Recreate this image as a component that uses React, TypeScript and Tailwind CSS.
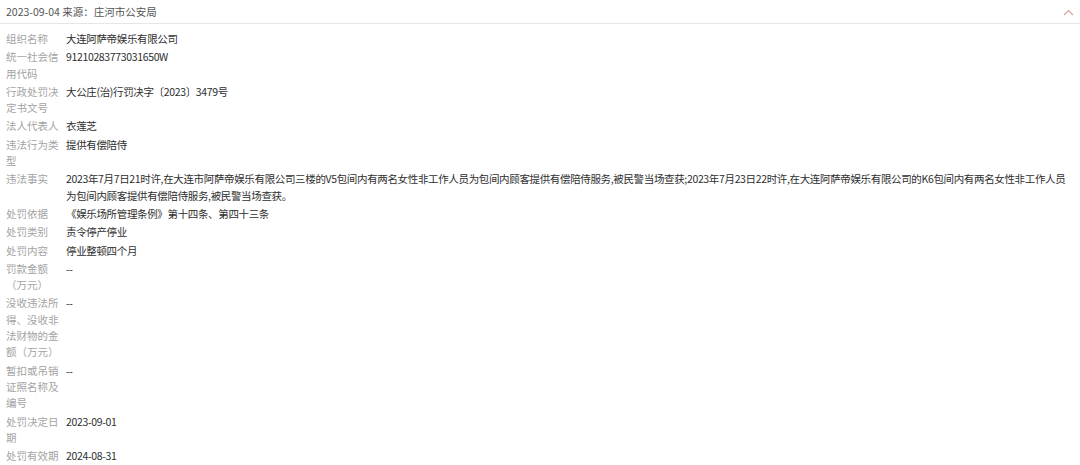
import React from 'react';

const rows: { label: string; value: React.ReactNode }[] = [
  { label: '组织名称', value: '大连阿萨帝娱乐有限公司' },
  { label: '统一社会信用代码', value: '91210283773031650W' },
  { label: '行政处罚决定书文号', value: '大公庄(治)行罚决字〔2023〕3479号' },
  { label: '法人代表人', value: '衣莲芝' },
  { label: '违法行为类型', value: '提供有偿陪侍' },
  {
    label: '违法事实',
    value: (
      <>
        2023年7月7日21时许,在大连市阿萨帝娱乐有限公司三楼的V5包间内有两名女性非工作人员为包间内顾客提供有偿陪侍服务,被民警当场查获;2023年7月23日22时许,在大连阿萨帝娱乐有限公司的K6包间内有两名女性非工作人员
        <br />
        为包间内顾客提供有偿陪侍服务,被民警当场查获。
      </>
    ),
  },
  { label: '处罚依据', value: '《娱乐场所管理条例》第十四条、第四十三条' },
  { label: '处罚类别', value: '责令停产停业' },
  { label: '处罚内容', value: '停业整顿四个月' },
  { label: '罚款金额（万元）', value: '--' },
  { label: '没收违法所得、没收非法财物的金额（万元）', value: '--' },
  { label: '暂扣或吊销证照名称及编号', value: '--' },
  { label: '处罚决定日期', value: '2023-09-01' },
  { label: '处罚有效期', value: '2024-08-31' },
];

export default function App() {
  return (
    <div
      className="w-[1080px] h-[465px] overflow-hidden bg-white text-[10.5px]"
      style={{ fontFamily: '"Noto Sans CJK SC", "Noto Sans", sans-serif' }}
    >
      {/* header */}
      <div className="flex items-center justify-between h-[24px] pl-[6px] pr-[6px] border-b border-[#e6e6e6]">
        <span className="text-[#555]">2023-09-04 来源：庄河市公安局</span>
        <svg width="11" height="7" viewBox="0 0 11 7" className="mt-[1px]">
          <polyline points="1,6 5.5,1.5 10,6" fill="none" stroke="#d9a0a0" strokeWidth="1.1" />
        </svg>
      </div>

      <div className="flex flex-col gap-[2px] pt-[7px] pl-[6px] pr-[4px] leading-[16.3px]">
        {rows.map((r) => (
          <div key={r.label} className="flex">
            <div className="w-[54px] shrink-0 text-[#a3a3a3] break-all">{r.label}</div>
            <div className="ml-[6px] flex-1 text-[#2e2e2e] whitespace-nowrap tracking-[-0.35px]">{r.value}</div>
          </div>
        ))}
      </div>
    </div>
  );
}
